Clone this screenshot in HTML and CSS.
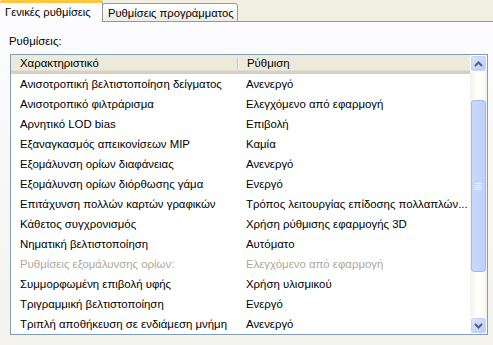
FILE: index.html
```html
<!DOCTYPE html>
<html lang="el">
<head>
  <meta charset="UTF-8" />
  <title>Ρυθμίσεις</title>
  <link rel="stylesheet" href="styles.css">
</head>
<body>
  <div class="tabs">
    <div class="tab active">Γενικές ρυθμίσεις</div>
    <div class="tab">Ρυθμίσεις προγράμματος</div>
    <div class="tab-rest"></div>
  </div>

  <div class="pane">
    <div class="caption">Ρυθμίσεις:</div>

    <div class="listbox">
      <div class="grid">
        <div class="head">
          <div class="col1 hcell">Χαρακτηριστικό</div>
          <div class="col2 hcell">Ρύθμιση</div>
        </div>
        <div class="row"><div class="col1">Ανισοτροπική βελτιστοποίηση δείγματος</div><div class="col2">Ανενεργό</div></div>
        <div class="row"><div class="col1">Ανισοτροπικό φιλτράρισμα</div><div class="col2">Ελεγχόμενο από εφαρμογή</div></div>
        <div class="row"><div class="col1">Αρνητικό LOD bias</div><div class="col2">Επιβολή</div></div>
        <div class="row"><div class="col1">Εξαναγκασμός απεικονίσεων MIP</div><div class="col2">Καμία</div></div>
        <div class="row"><div class="col1">Εξομάλυνση ορίων διαφάνειας</div><div class="col2">Ανενεργό</div></div>
        <div class="row"><div class="col1">Εξομάλυνση ορίων διόρθωσης γάμα</div><div class="col2">Ενεργό</div></div>
        <div class="row"><div class="col1">Επιτάχυνση πολλών καρτών γραφικών</div><div class="col2">Τρόπος λειτουργίας επίδοσης πολλαπλών...</div></div>
        <div class="row"><div class="col1">Κάθετος συγχρονισμός</div><div class="col2">Χρήση ρύθμισης εφαρμογής 3D</div></div>
        <div class="row"><div class="col1">Νηματική βελτιστοποίηση</div><div class="col2">Αυτόματο</div></div>
        <div class="row disabled"><div class="col1">Ρυθμίσεις εξομάλυνσης ορίων:</div><div class="col2">Ελεγχόμενο από εφαρμογή</div></div>
        <div class="row"><div class="col1">Συμμορφωμένη επιβολή υφής</div><div class="col2">Χρήση υλισμικού</div></div>
        <div class="row"><div class="col1">Τριγραμμική βελτιστοποίηση</div><div class="col2">Ενεργό</div></div>
        <div class="row"><div class="col1">Τριπλή αποθήκευση σε ενδιάμεση μνήμη</div><div class="col2">Ανενεργό</div></div>
      </div>

      <div class="scrollbar">
        <div class="sbtn">
          <svg width="9" height="6" viewBox="0 0 9 6"><path d="M1 5 L4.5 1.5 L8 5" fill="none" stroke="#4d6185" stroke-width="2"/></svg>
        </div>
        <div class="track">
          <div class="thumb">
            <div class="grip"></div>
          </div>
        </div>
        <div class="sbtn">
          <svg width="9" height="6" viewBox="0 0 9 6"><path d="M1 1 L4.5 4.5 L8 1" fill="none" stroke="#4d6185" stroke-width="2"/></svg>
        </div>
      </div>
    </div>
  </div>
</body>
</html>
```

FILE: styles.css
```css
body {
  margin: 0;
  width: 493px;
  height: 345px;
  overflow: hidden;
  background: #f1efe2;
  font-family: 'Liberation Sans', Arial, sans-serif;
  font-size: 11.4px;
  color: #000;
}

.tabs {
  display: flex;
  align-items: flex-end;
  height: 22px;
  font-size: 11.2px;
}

.tab {
  box-sizing: border-box;
  height: 19px;
  padding: 3px 5px 0 5px;
  background: linear-gradient(#ffffff, #ecebe6);
  border: 1px solid #919b9c;
  border-bottom: 1px solid #919b9c;
  border-radius: 3px 3px 0 0;
  margin-left: -1px;
  white-space: nowrap;
}

.tab.active {
  height: 22px;
  width: 103px;
  padding: 3px 5px 0 5px;
  margin-left: 0;
  background: #fcfcfe;
  border-top: 3px solid #ffc83c;
  border-bottom: none;
  border-left: none;
  position: relative;
  z-index: 1;
}

.tab:nth-child(2) {
  width: 136px;
  padding-left: 5px;
}

.tab-rest {
  flex: 1;
  border-bottom: 1px solid #919b9c;
}

.pane {
  height: 323px;
  background: linear-gradient(#fcfcfe, #f4f3ee);
}

.caption {
  padding: 13px 0 0 9px;
  height: 19px;
}

.listbox {
  display: flex;
  width: 476px;
  margin-left: 10px;
  border: 1px solid #7f9db9;
  background: #fff;
}

.grid {
  flex: 1;
}

.head {
  display: flex;
  height: 16px;
  background: #ebeadb;
  border-bottom: 3px solid #d6d2c2;
  box-shadow: inset 0 -1px 0 #e2decd;
}

.row {
  display: flex;
  height: 20px;
  line-height: 20px;
}

.col1 {
  width: 217px;
  padding-left: 9px;
  white-space: nowrap;
}

.col2 {
  flex: 1;
  padding-left: 9px;
  white-space: nowrap;
  overflow: hidden;
}

.head .col1 {
  border-right: 1px solid #c7c5b2;
  box-shadow: 1px 0 0 #fff;
  margin: 3px 0 2px 0;
  line-height: 11px;
}

.head .col2 {
  margin-top: 3px;
  line-height: 11px;
}

.disabled {
  color: #aca899;
}

.scrollbar {
  display: flex;
  flex-direction: column;
  width: 17px;
  background: linear-gradient(90deg, #f3f1ec, #fefefb 40%, #fefefb 70%, #f3f1ec);
}

.sbtn {
  box-sizing: border-box;
  height: 17px;
  display: flex;
  align-items: center;
  justify-content: center;
  background: linear-gradient(135deg, #dbe6fd, #b9cbf7);
  border: 1px solid #ffffff;
  border-radius: 3px;
  box-shadow: inset 0 0 0 1px #c2d3fc;
}

.track {
  flex: 1;
  padding-top: 28px;
}

.thumb {
  box-sizing: border-box;
  height: 172px;
  margin: 0 1px;
  background: linear-gradient(90deg, #c9d8fc, #bed0fa);
  border: 1px solid #a5bbef;
  border-radius: 3px;
  display: flex;
  align-items: center;
  justify-content: center;
}

.grip {
  width: 7px;
  height: 7px;
  background: repeating-linear-gradient(#eef3fe 0 1px, transparent 1px 2px);
}
```
